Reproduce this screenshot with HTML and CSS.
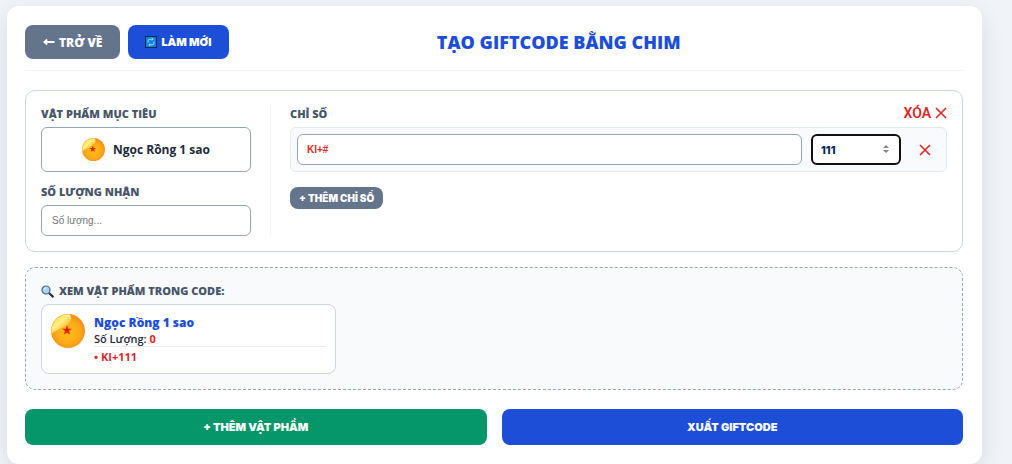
FILE: index.html
```html
<!DOCTYPE html>
<html lang="vi">
<head>
<meta charset="utf-8">
<meta name="viewport" content="width=device-width, initial-scale=1">
<title>Tạo Giftcode</title>
<link rel="stylesheet" href="styles.css">
</head>
<body>
<svg class="defs" aria-hidden="true">
  <defs>
    <radialGradient id="ball" cx="50%" cy="55%" r="55%">
      <stop offset="0" stop-color="#ffbf12"/>
      <stop offset="0.6" stop-color="#fdab18"/>
      <stop offset="1" stop-color="#f58a1c"/>
    </radialGradient>
    <linearGradient id="shine" x1="0.1" y1="0.1" x2="0.8" y2="0.9">
      <stop offset="0" stop-color="#ffe21a"/>
      <stop offset="0.45" stop-color="#fff08a"/>
      <stop offset="1" stop-color="#ffc22a" stop-opacity="0.3"/>
    </linearGradient>
    <symbol id="dragon-ball" viewBox="0 0 34 34">
      <circle cx="17" cy="17" r="17" fill="url(#ball)"/>
      <path d="M0.6 20C-1 9 7 0 18 0.2C21 2 21 6 18 9C13 14 6 15 0.6 20Z" fill="url(#shine)"/>
      <path d="M16 11.2L17.3 14.8L20.8 14.8L18 17.1L19.2 20.7L16 18.6L12.8 20.7L14 17.1L11.2 14.8L14.7 14.8Z" fill="#ee1c0c"/>
    </symbol>
    <symbol id="cross" viewBox="0 0 12 12">
      <path d="M1 1L11 11M11 1L1 11" fill="none" stroke="currentColor" stroke-width="1.6"/>
    </symbol>
  </defs>
</svg>
<main class="card">
  <header class="header">
    <button type="button" class="btn btn-back">
      <svg class="arrow" viewBox="0 0 12 8" aria-hidden="true"><path d="M4.2 1.5L1.5 4L4.2 6.5M1.5 4H11.5" fill="none" stroke="currentColor" stroke-width="1.8"/></svg>
      TRỞ VỀ
    </button>
    <button type="button" class="btn btn-primary btn-refresh">
      <svg class="refresh" viewBox="0 0 12 12" aria-hidden="true"><rect x="0.5" y="0.5" width="11" height="11" fill="#0a84e0" stroke="#0b2a52"/><path d="M3 6.5V5Q3 3.2 5 3.2H8M9 5.5V7Q9 8.8 7 8.8H4M6.8 2L8.2 3.2L6.8 4.6M5.2 7.5L3.8 8.8L5.2 10" fill="none" stroke="#b9e4ff" stroke-width="0.9"/></svg>
      LÀM MỚI
    </button>
    <h1 class="title">TẠO GIFTCODE BẰNG CHIM</h1>
  </header>

  <section class="item">
    <div class="target">
      <span class="label" id="target-label">VẬT PHẨM MỤC TIÊU</span>
      <button type="button" class="picker" aria-labelledby="target-label target-name">
        <svg class="ball-small" aria-hidden="true"><use href="#dragon-ball"/></svg>
        <span id="target-name">Ngọc Rồng 1 sao</span>
      </button>
      <label class="label label-amount" for="amount">SỐ LƯỢNG NHẬN</label>
      <input class="field" id="amount" type="text" placeholder="Số lượng...">
    </div>
    <div class="stats">
      <div class="stats-head">
        <label class="label" for="stat">CHỈ SỐ</label>
        <button type="button" class="remove">XÓA <svg class="cross-icon" aria-hidden="true"><use href="#cross"/></svg></button>
      </div>
      <div class="stat-row">
        <input class="field stat-name" id="stat" type="text" value="KI+#">
        <div class="number">
          <input class="field stat-value" type="number" value="111" aria-label="Giá trị chỉ số">
          <svg class="spinner" viewBox="0 0 6 8" aria-hidden="true"><path d="M0 3L3 0L6 3ZM0 5L3 8L6 5Z" fill="#858585"/></svg>
        </div>
        <button type="button" class="remove remove-row" aria-label="Xóa chỉ số"><svg class="cross-icon" aria-hidden="true"><use href="#cross"/></svg></button>
      </div>
      <button type="button" class="btn-small">+ THÊM CHỈ SỐ</button>
    </div>
  </section>

  <section class="preview">
    <h2 class="label preview-title">
      <svg class="lens" viewBox="0 0 13 13" aria-hidden="true"><path d="M8 8L11.8 11.6" stroke="#28313b" stroke-width="2.2" stroke-linecap="round"/><circle cx="5" cy="5" r="4" fill="#a5d6f5" stroke="#4d6478" stroke-width="1.2"/><path d="M3 4.6Q3.4 3 5 2.8" fill="none" stroke="#fff"/></svg>
      XEM VẬT PHẨM TRONG CODE:
    </h2>
    <article class="preview-card">
      <svg class="ball-large" aria-hidden="true"><use href="#dragon-ball"/></svg>
      <div class="preview-body">
        <h3 class="preview-name">Ngọc Rồng 1 sao</h3>
        <p class="preview-amount">Số Lượng: <span class="count">0</span></p>
        <p class="preview-stat">• KI+111</p>
      </div>
    </article>
  </section>

  <footer class="actions">
    <button type="button" class="btn btn-add">+ THÊM VẬT PHẨM</button>
    <button type="button" class="btn btn-primary">XUẤT GIFTCODE</button>
  </footer>
</main>
</body>
</html>
```
FILE: styles.css
```css
* {
  box-sizing: border-box;
}

body {
  margin: 0;
  padding: 6px 30px 0 7px;
  background: #f0f4f9;
  color: #1e293b;
  font-family: "Open Sans", "Noto Sans", sans-serif;
  overflow: hidden;
}

button,
input {
  font-family: inherit;
}

h1,
h2,
h3,
p {
  margin: 0;
}

svg {
  flex: none;
}

.defs {
  position: absolute;
  width: 0;
  height: 0;
}

.card {
  padding: 19px 19px 19px 18px;
  border-radius: 12px;
  background: #fff;
  box-shadow: 0 8px 25px rgba(0, 0, 0, 0.1);
}

.header {
  display: flex;
  align-items: center;
  gap: 8px;
  padding-bottom: 11px;
  border-bottom: 1px solid #f1f5f9;
}

.title {
  flex: 1;
  padding-right: 82px;
  color: #1d4ed8;
  font-size: 18px;
  font-weight: 800;
  line-height: 24px;
  text-align: center;
}

.btn {
  display: flex;
  align-items: center;
  justify-content: center;
  gap: 4px;
  padding: 0 18px;
  border: 0;
  border-radius: 8px;
  color: #fff;
  font-family: Inter, sans-serif;
  font-size: 11px;
  font-weight: 900;
}

.header .btn {
  height: 34px;
}

.header .btn-back {
  background: #64748b;
  font-family: "Open Sans", sans-serif;
  font-size: 12px;
  font-weight: 800;
}

.header .btn-refresh {
  padding: 0 17px;
}

.btn-primary {
  background: #1d4ed8;
}

.arrow {
  width: 12px;
  height: 8px;
}

.refresh {
  width: 12px;
  height: 12px;
}

.item {
  display: flex;
  margin-top: 19px;
  padding: 15px;
  border: 1px solid #cbd5e1;
  border-radius: 10px;
}

.target {
  display: flex;
  flex-direction: column;
  width: 230px;
  padding-right: 19px;
  border-right: 1px solid #f1f5f9;
}

.label {
  color: #475569;
  font-size: 11px;
  font-weight: 800;
  line-height: 16px;
}

.target .label,
.stats-head {
  margin-bottom: 5px;
}

.target .label-amount {
  margin-top: 12px;
}

.picker {
  display: flex;
  align-items: center;
  justify-content: center;
  gap: 8px;
  height: 45px;
  border: 1px solid #94a3b8;
  border-radius: 6px;
  background: #fff;
  color: #1e293b;
  font-size: 12px;
  font-weight: 700;
}

.ball-small {
  width: 23px;
  height: 23px;
}

.field {
  width: 100%;
  height: 31px;
  padding: 0 10px;
  border: 1px solid #94a3b8;
  border-radius: 6px;
  background: #fff;
  font-family: "Liberation Sans", Arial, sans-serif;
  font-size: 10px;
  font-weight: 700;
}

.field::placeholder {
  color: #757575;
}

#amount {
  font-weight: 400;
}

.stats {
  display: flex;
  flex: 1;
  flex-direction: column;
  align-items: stretch;
  padding-left: 19px;
}

.stats-head {
  display: flex;
  align-items: center;
  justify-content: space-between;
}

.remove {
  display: flex;
  align-items: center;
  justify-content: center;
  gap: 4px;
  height: 16px;
  padding: 0 0 3px;
  border: 0;
  background: none;
  color: #dc2626;
  font-family: Roboto, sans-serif;
  font-size: 14px;
  font-weight: 600;
}

.cross-icon {
  width: 12px;
  height: 12px;
}

.stat-row {
  display: flex;
  align-items: center;
  gap: 9px;
  padding: 6px;
  border: 1px solid #e2e8f0;
  border-radius: 6px;
  background: #f8fafc;
}

.stat-name {
  flex: 1;
  padding: 0 9px;
  color: #dc2626;
}

.number {
  position: relative;
  width: 90px;
}

.stat-value {
  display: block;
  padding: 0 8px;
  border: 2px solid #101010;
  color: #0b1f5c;
  font-family: Inter, sans-serif;
  font-size: 11px;
  font-weight: 800;
  appearance: textfield;
}

.stat-value::-webkit-inner-spin-button {
  appearance: none;
}

.spinner {
  position: absolute;
  top: 11px;
  right: 12px;
  width: 6px;
  height: 8px;
  pointer-events: none;
}

.remove-row {
  width: 30px;
  padding: 0;
}

.btn-small {
  align-self: flex-start;
  height: 22px;
  margin-top: 15px;
  padding: 0 9px;
  border: 0;
  border-radius: 8px;
  background: #64748b;
  color: #fff;
  font-family: Inter, sans-serif;
  font-size: 10px;
  font-weight: 900;
}

.preview {
  margin-top: 15px;
  padding: 15px;
  border: 1px dashed #94a3b8;
  border-radius: 10px;
  background: #f8fafc;
}

.preview-title {
  display: flex;
  align-items: center;
  gap: 5px;
  margin-bottom: 5px;
}

.lens {
  width: 13px;
  height: 13px;
}

.preview-card {
  display: flex;
  gap: 9px;
  width: 295px;
  padding: 9px;
  border: 1px solid #cbd5e1;
  border-radius: 8px;
  background: #fff;
}

.ball-large {
  width: 34px;
  height: 34px;
}

.preview-body {
  flex: 1;
}

.preview-name {
  color: #1d4ed8;
  font-size: 12px;
  font-weight: 800;
  line-height: 18px;
}

.preview-amount {
  border-bottom: 1px solid #eaeef2;
  font-size: 11px;
  font-weight: 600;
  line-height: 14px;
}

.count {
  color: #dc2626;
  font-weight: 700;
}

.preview-stat {
  padding-top: 3px;
  color: #dc2626;
  font-size: 11px;
  font-weight: 700;
  line-height: 14px;
}

.actions {
  display: grid;
  grid-template-columns: 1fr 1fr;
  gap: 15px;
  margin-top: 19px;
}

.actions .btn {
  height: 36px;
}

.btn-add {
  background: #059669;
}
```
